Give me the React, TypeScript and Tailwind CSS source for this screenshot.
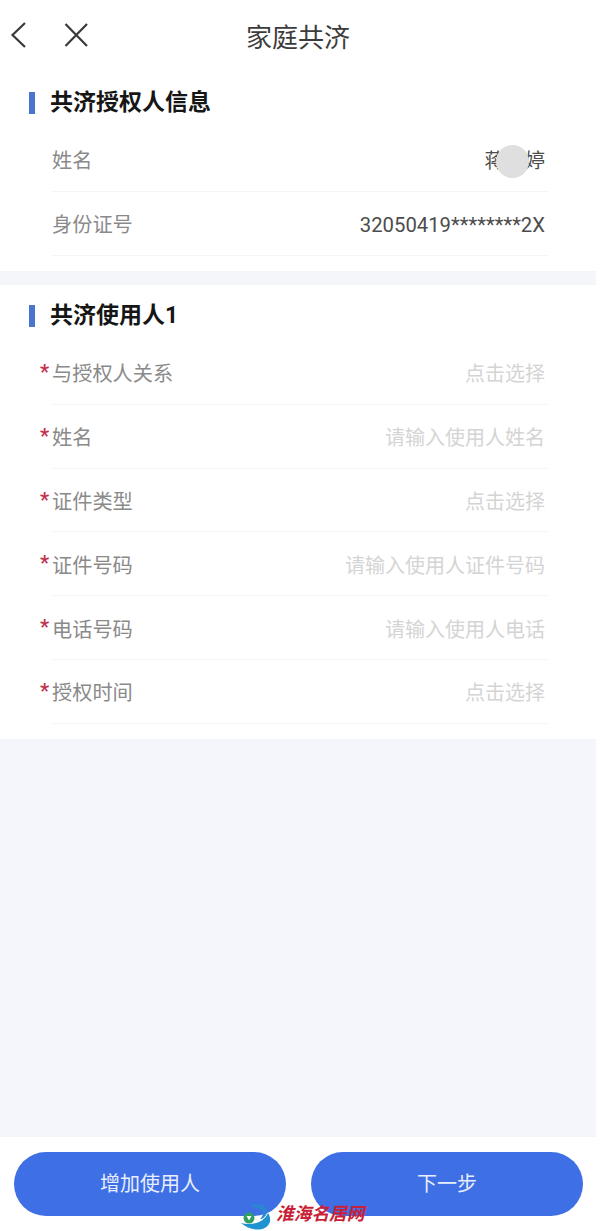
import React from "react";

const font = { fontFamily: '"Roboto","Noto Sans CJK SC",sans-serif' };

function Heading({ children }: { children: React.ReactNode }) {
  return (
    <div className="flex h-[24px] items-center pl-[29px]">
      <div className="h-[22px] w-[6px] bg-[#4a75cf]" />
      <div className="ml-[15px] text-[23px] leading-[24px] font-bold text-[#161616]">{children}</div>
    </div>
  );
}

function Row({ label, value, required, dark }: { label: string; value?: React.ReactNode; required?: boolean; dark?: boolean }) {
  return (
    <div className="relative mx-[52px] flex h-[63.8px] items-center justify-between border-b border-[#f4f5f6] pt-[4px]">
      {required && (
        <span className="absolute top-[19px] left-[-12px] text-[20px] leading-[24px] font-bold text-[#c2324f]">*</span>
      )}
      <span className="text-[20.2px] leading-[28px] text-[#8a8a8a]">{label}</span>
      <span className={dark ? "mr-[3px] text-[20.3px] leading-[28px] text-[#4c4c4c]" : "mr-[3px] text-[20px] leading-[28px] text-[#d4d4d4]"}>{value}</span>
    </div>
  );
}

export default function App() {
  return (
    <div style={font} className="relative flex h-[1231px] w-[600px] flex-col overflow-hidden bg-white">
      <header className="relative flex h-[74px] shrink-0 items-center pb-[4px]">
        <svg className="ml-[9px]" width="20" height="30" viewBox="0 0 20 30" fill="none" stroke="#3a3a3a" strokeWidth="2.2">
          <path d="M16 3 3.500 15 16 27" />
        </svg>
        <svg className="ml-[35px]" width="26" height="26" viewBox="0 0 26 26" fill="none" stroke="#3a3a3a" strokeWidth="2.2">
          <path d="M1.500 2 23 24M23 2 1.500 24" />
        </svg>
        <div className="absolute top-[22px] left-[246px] text-[26px] leading-[32px] text-[#3c3c3c]">家庭共济</div>
      </header>

      <section className="h-[197px] shrink-0 pt-[17px]">
        <Heading>共济授权人信息</Heading>
        <div className="pt-[13px]">
          <Row
            label="姓名"
            dark
            value={
              <span className="relative inline-block">
                蒋<span className="inline-block w-[20px]" />婷
                <span className="absolute top-[-2px] left-[12px] h-[33px] w-[33px] rounded-full bg-[#dfdfdf]" />
              </span>
            }
          />
          <Row label="身份证号" dark value="32050419********2X" />
        </div>
      </section>

      <div className="h-[14px] w-[596px] shrink-0 bg-[#f5f6fa]" />

      <section className="h-[454px] shrink-0 pt-[19px]">
        <Heading>共济使用人1</Heading>
        <div className="pt-[13px]">
          <Row required label="与授权人关系" value="点击选择" />
          <Row required label="姓名" value="请输入使用人姓名" />
          <Row required label="证件类型" value="点击选择" />
          <Row required label="证件号码" value="请输入使用人证件号码" />
          <Row required label="电话号码" value="请输入使用人电话" />
          <Row required label="授权时间" value="点击选择" />
        </div>
      </section>

      <div className="min-h-0 w-[596px] flex-1 bg-[#f4f6fb]" />

      <footer className="flex h-[94px] shrink-0 gap-[25px] pt-[15px] pl-[14px]">
        <button className="h-[64px] w-[272px] rounded-full bg-[#3f6fe5] text-[20px] text-[#e8eefc]">增加使用人</button>
        <button className="h-[64px] w-[272px] rounded-full bg-[#3f6fe5] text-[20px] text-[#e8eefc]">下一步</button>
      </footer>

      <div className="absolute top-[1202px] left-[236px] flex items-start">
        <svg width="40" height="29" viewBox="0 0 40 29">
          <path d="M14 3C24 0 33 4 31 11C29 15 27 17 24 17C28 13 28 9 24 7C20 5 17 5 14 3Z" fill="#2a86d0" />
          <path d="M5 21C15 24 28 21 32 11C37 18 33 27 23 27.500C16 28 10 25 5 21Z" fill="#1f93d2" />
          <circle cx="13" cy="16" r="5.500" fill="#2f9e5f" />
          <path d="M10.500 14H15.500L13 18.500Z" fill="#ffffff" />
        </svg>
        <span className="-mt-[1px] text-[17.7px] leading-[22px] font-bold text-[#c91f37] italic" style={{ fontFamily: '"Noto Sans CJK SC",sans-serif' }}>
          淮海名居网
        </span>
      </div>
    </div>
  );
}
